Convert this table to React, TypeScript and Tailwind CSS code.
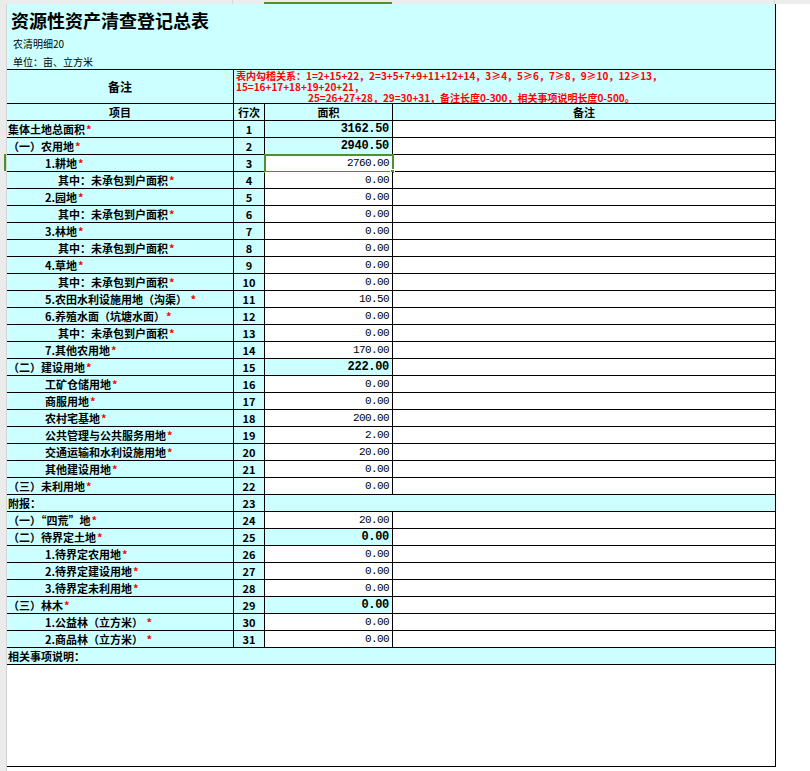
import React from "react";

type Row = {
  no: number;
  name: string;
  level: 0 | 1 | 2;
  value?: string;
  bold?: boolean;
  star?: boolean;
  span?: boolean;
  selected?: boolean;
};

const sub = "其中：未承包到户面积";

const rows: Row[] = [
  { no: 1, name: "集体土地总面积", level: 0, value: "3162.50", bold: true, star: true },
  { no: 2, name: "（一）农用地", level: 0, value: "2940.50", bold: true, star: true },
  { no: 3, name: "1.耕地", level: 1, value: "2760.00", star: true, selected: true },
  { no: 4, name: sub, level: 2, value: "0.00", star: true },
  { no: 5, name: "2.园地", level: 1, value: "0.00", star: true },
  { no: 6, name: sub, level: 2, value: "0.00", star: true },
  { no: 7, name: "3.林地", level: 1, value: "0.00", star: true },
  { no: 8, name: sub, level: 2, value: "0.00", star: true },
  { no: 9, name: "4.草地", level: 1, value: "0.00", star: true },
  { no: 10, name: sub, level: 2, value: "0.00", star: true },
  { no: 11, name: "5.农田水利设施用地（沟渠） ", level: 1, value: "10.50", star: true },
  { no: 12, name: "6.养殖水面（坑塘水面）", level: 1, value: "0.00", star: true },
  { no: 13, name: sub, level: 2, value: "0.00", star: true },
  { no: 14, name: "7.其他农用地", level: 1, value: "170.00", star: true },
  { no: 15, name: "（二）建设用地", level: 0, value: "222.00", bold: true, star: true },
  { no: 16, name: "工矿仓储用地", level: 1, value: "0.00", star: true },
  { no: 17, name: "商服用地", level: 1, value: "0.00", star: true },
  { no: 18, name: "农村宅基地", level: 1, value: "200.00", star: true },
  { no: 19, name: "公共管理与公共服务用地", level: 1, value: "2.00", star: true },
  { no: 20, name: "交通运输和水利设施用地", level: 1, value: "20.00", star: true },
  { no: 21, name: "其他建设用地", level: 1, value: "0.00", star: true },
  { no: 22, name: "（三）未利用地", level: 0, value: "0.00", star: true },
  { no: 23, name: "附报：", level: 0, span: true },
  { no: 24, name: "（一）“四荒”地", level: 0, value: "20.00", star: true },
  { no: 25, name: "（二）待界定土地", level: 0, value: "0.00", bold: true, star: true },
  { no: 26, name: "1.待界定农用地", level: 1, value: "0.00", star: true },
  { no: 27, name: "2.待界定建设用地", level: 1, value: "0.00", star: true },
  { no: 28, name: "3.待界定未利用地", level: 1, value: "0.00", star: true },
  { no: 29, name: "（三）林木", level: 0, value: "0.00", bold: true, star: true },
  { no: 30, name: "1.公益林（立方米） ", level: 1, value: "0.00", star: true },
  { no: 31, name: "2.商品林（立方米） ", level: 1, value: "0.00", star: true },
];

const indent = ["pl-[1px]", "pl-[38px]", "pl-[51px]"];

const cjk = "font-['Noto_Sans_CJK_SC','Liberation_Sans',sans-serif]";
const mono = "font-['Liberation_Mono','Noto_Sans_CJK_SC',monospace]";

function DataRow({ row }: { row: Row }) {
  return (
    <div className="grid h-[17px] grid-cols-[227px_31px_128px_382px] border-b border-black">
      <div
        className={`flex items-center overflow-hidden whitespace-pre border-r border-black bg-[#ccffff] text-[11px] font-bold leading-none text-black ${indent[row.level]}`}
      >
        {row.name}
        {row.star && <span className="ml-[1px] text-[#ff0000]">*</span>}
      </div>
      <div className="flex items-center justify-center border-r border-black bg-[#ccffff] text-[11px] font-bold leading-none">
        {row.no}
      </div>
      {row.span ? (
        <div className="col-span-2 bg-[#ccffff]" />
      ) : (
        <>
          <div
            className={`relative flex items-center justify-end border-r border-black pr-[3px] leading-none text-black ${mono} ${
              row.bold
                ? "bg-[#ccffff] text-[12px] font-bold tracking-[-0.3px]"
                : "bg-white text-[11px] tracking-[-0.6px]"
            }`}
          >
            {row.value}
            {row.selected && (
              <>
                <div className="absolute -top-[1px] -left-[1px] h-[19px] w-[130px] border-2 border-[#4e8f2e]" />
                <div className="absolute -right-[3px] -bottom-[3px] h-[5px] w-[5px] border border-white bg-[#4e8f2e]" />
              </>
            )}
          </div>
          <div className="bg-white" />
        </>
      )}
    </div>
  );
}

export default function App() {
  return (
    <div className={`flex h-[771px] w-[810px] flex-col overflow-hidden bg-white ${cjk}`}>
      {/* column header strip */}
      <div className="flex h-[4px] bg-[#ececec]">
        <div className="w-[233px] border-r border-[#d6d6d6]" />
        <div className="w-[31px]" />
        <div className="mt-[2px] h-[2px] w-[128px] bg-[#4e8f2e]" />
        <div className="w-[383px] border-r border-[#d6d6d6]" />
      </div>

      <div className="flex flex-1">
        {/* row header strip */}
        <div className="flex w-[7px] flex-col border-r border-[#d4d4d4] bg-[#ebebeb]">
          <div className="h-[150px]" />
          <div className="h-[17px] w-[2px] self-end bg-[#4e8f2e]" />
        </div>

        <div className="flex h-[763px] w-[769px] flex-col border-r border-b border-black">
          {/* title block */}
          <div className="h-[66px] border-b border-black bg-[#ccffff] pt-[6px]">
            <div className="pl-[4px] text-[18px] font-bold leading-[20px] text-black">
              资源性资产清查登记总表
            </div>
            <div className="mt-[7px] pl-[6px] text-[10px] leading-[14px] text-black">农清明细20</div>
            <div className="mt-[4px] pl-[6px] text-[10px] leading-[14px] text-black">单位：亩、立方米</div>
          </div>

          {/* remark header */}
          <div className="grid h-[34px] grid-cols-[227px_541px] border-b border-black bg-[#ccffff]">
            <div className="flex items-center justify-center border-r border-black text-[12px] font-bold">
              备注
            </div>
            <div className="pl-[2px] text-[10px] font-bold leading-[11px] text-[#ff0000]">
              <div className="whitespace-nowrap">
                表内勾稽关系：1=2+15+22，2=3+5+7+9+11+12+14，3≥4，5≥6，7≥8，9≥10，12≥13，
              </div>
              <div className="whitespace-nowrap">15=16+17+18+19+20+21，</div>
              <div className="whitespace-nowrap pl-[72px]">
                25=26+27+28，29=30+31，备注长度0-300，相关事项说明长度0-500。
              </div>
            </div>
          </div>

          {/* column titles */}
          <div className="grid h-[17px] grid-cols-[227px_31px_128px_382px] border-b border-black bg-[#ccffff] text-[11px] font-bold leading-none">
            <div className="flex items-center justify-center border-r border-black">项目</div>
            <div className="flex items-center justify-center border-r border-black">行次</div>
            <div className="flex items-center justify-center border-r border-black">面积</div>
            <div className="flex items-center justify-center">备注</div>
          </div>

          {rows.map((row) => (
            <DataRow key={row.no} row={row} />
          ))}

          <div className="flex h-[17px] items-center border-b border-black bg-[#ccffff] pl-[1px] text-[11px] font-bold leading-none">
            相关事项说明：
          </div>
          <div className="flex-1 bg-white" />
        </div>
      </div>
    </div>
  );
}
